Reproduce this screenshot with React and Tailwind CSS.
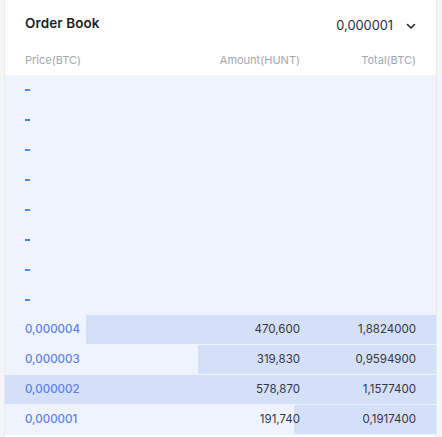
import React from "react";

const bids = [
  { price: "0,000004", amount: "470,600", total: "1,8824000", start: 81 },
  { price: "0,000003", amount: "319,830", total: "0,9594900", start: 193 },
  { price: "0,000002", amount: "578,870", total: "1,1577400", start: 0 },
  { price: "0,000001", amount: "191,740", total: "0,1917400", start: 289 },
];

const font = { fontFamily: "Inter, 'Noto Sans', sans-serif" };

export default function App() {
  return (
    <div className="w-[442px] h-[437px] bg-[#f4f5f6] flex" style={font}>
      <div className="w-[4px] shrink-0" />
      <div className="w-[433px] h-full bg-white border-l border-r border-[#e8eaec] flex flex-col">
        <div className="h-[46px] flex items-center justify-between pl-5 pr-5 pt-[1px]">
          <span className="text-[13.5px] font-semibold text-[#1c1f2a] tracking-[0.1px]">Order Book</span>
          <div className="flex items-center gap-[13px] pt-[4px]">
            <span className="text-[12.8px] text-[#2a2d36]">0,000001</span>
            <svg width="10" height="7" viewBox="0 0 10 7" className="mt-[1px]">
              <path d="M1.5 1.5 L5 5 L8.5 1.5" fill="none" stroke="#222" strokeWidth="1.6" strokeLinecap="round" strokeLinejoin="round" />
            </svg>
          </div>
        </div>
        <div className="h-[29px] flex items-center pl-5 pr-5 text-[11px] text-[#a3a7ae]">
          <span className="flex-1">Price(BTC)</span>
          <span className="w-[120px] text-right">Amount(HUNT)</span>
          <span className="w-[116px] text-right">Total(BTC)</span>
        </div>
        <div className="bg-[#eff3fd] flex flex-col">
          {Array.from({ length: 8 }).map((_, i) => (
            <div key={i} className="h-[30px] flex items-center pl-5">
              <span className="block w-[5px] h-[2px] bg-[#4c85f2] mt-[-1px]" />
            </div>
          ))}
          {bids.map((b, i) => (
            <div key={i} className="relative h-[30px]">
              <div
                className="absolute top-0 right-0 h-[29px] bg-[#d3e0f8]"
                style={{ left: b.start + "px" }}
              />
              <div className="relative h-[29px] flex items-center pl-5 pr-5 text-[11.5px]">
                <span className="flex-1 text-[#5a7ff0] font-medium">{b.price}</span>
                <span className="w-[120px] text-right text-[#33363d]">{b.amount}</span>
                <span className="w-[116px] text-right text-[#33363d]">{b.total}</span>
              </div>
            </div>
          ))}
        </div>
      </div>
      <div className="flex-1" />
    </div>
  );
}
